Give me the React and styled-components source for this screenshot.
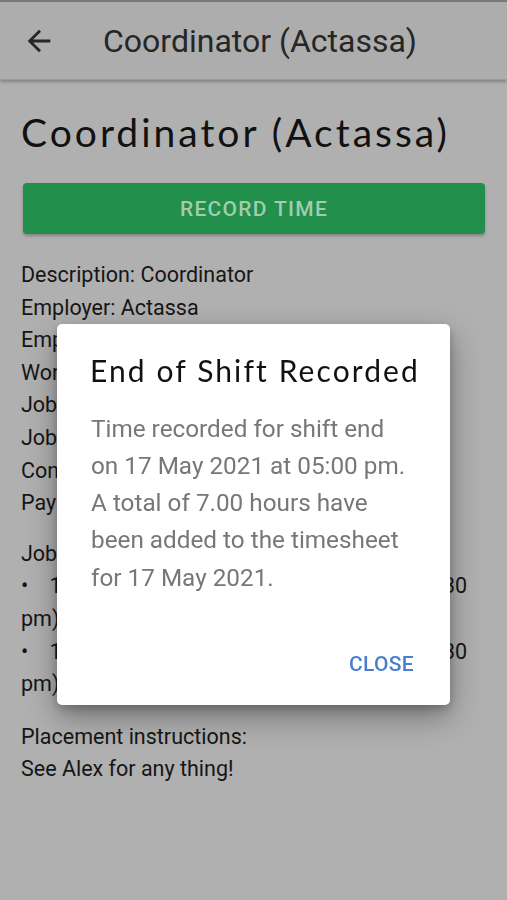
import React from "react";
import styled, { createGlobalStyle } from "styled-components";

const Global = createGlobalStyle`
  html, body { margin: 0; padding: 0; background: #b0b0b0; }
  body { font-family: Roboto, "Liberation Sans", sans-serif; }
  * { box-sizing: border-box; }
`;

const Page = styled.div`
  width: 507px;
  min-height: 900px;
  background: #b0b0b0;
  display: flex;
  flex-direction: column;
`;

const StatusEdge = styled.div`
  height: 2px;
  background: #7a7a7a;
`;

const AppBar = styled.header`
  height: 78px;
  background: #adadad;
  display: flex;
  align-items: center;
  padding-left: 22px;
  gap: 47px;
  box-shadow: 0 2px 3px rgba(0, 0, 0, 0.25);
  border-bottom: 1px solid #9c9c9c;
`;

const BackIcon = styled.svg`
  width: 34px;
  height: 34px;
  flex: none;
`;

const BarTitle = styled.h1`
  margin: 0;
  font-family: Roboto, sans-serif;
  font-weight: 400;
  font-size: 32px;
  color: #262626;
`;

const Content = styled.main`
  padding: 0 20px 0 21px;
  display: flex;
  flex-direction: column;
`;

const Heading = styled.h2`
  margin: 26px 0 0 0;
  font-family: Lato, sans-serif;
  font-weight: 400;
  font-size: 39px;
  letter-spacing: 3px;
  line-height: 52px;
  color: #111;
`;

const RecordButton = styled.button`
  margin: 25px 0 25px 2px;
  width: 462px;
  height: 51px;
  border: none;
  border-radius: 4px;
  background: #238f4c;
  color: #9fceaf;
  font-family: Roboto, sans-serif;
  font-weight: 500;
  font-size: 21px;
  letter-spacing: 1.3px;
  box-shadow: 0 2px 3px rgba(0, 0, 0, 0.25);
`;

const Block = styled.div`
  margin-bottom: ${(p) => p.$gap || 0}px;
`;

const Line = styled.div`
  font-family: Roboto, sans-serif;
  font-size: 21.5px;
  line-height: 32.6px;
  color: #161616;
`;

const Dialog = styled.div`
  position: fixed;
  left: 57px;
  top: 324px;
  width: 393px;
  height: 381px;
  background: #fff;
  border-radius: 5px;
  box-shadow: 0 12px 30px rgba(0, 0, 0, 0.35), 0 4px 10px rgba(0, 0, 0, 0.2);
  padding: 28px 36px 29px 33px;
  display: flex;
  flex-direction: column;
`;

const DialogTitle = styled.h3`
  margin: 0;
  font-family: Lato, sans-serif;
  font-weight: 400;
  font-size: 30px;
  letter-spacing: 2.1px;
  line-height: 36px;
  color: #111;
  white-space: nowrap;
`;

const DialogBody = styled.p`
  margin: 21.5px 0 0 1px;
  font-family: Roboto, sans-serif;
  font-size: 24.3px;
  line-height: 37.3px;
  color: #777;
`;

const Actions = styled.div`
  margin-top: auto;
  display: flex;
  justify-content: flex-end;
`;

const CloseButton = styled.button`
  border: none;
  background: none;
  padding: 0;
  font-family: Roboto, sans-serif;
  font-weight: 500;
  font-size: 21px;
  line-height: 24px;
  color: #4a7fcf;
  letter-spacing: 0.3px;
`;

export default function App() {
  return (
    <>
      <Global />
      <Page>
        <StatusEdge />
        <AppBar>
          <BackIcon viewBox="0 0 24 24">
            <path d="M20 11H7.83l5.59-5.59L12 4l-8 8 8 8 1.41-1.41L7.83 13H20v-2z" fill="#262626" />
          </BackIcon>
          <BarTitle>Coordinator (Actassa)</BarTitle>
        </AppBar>
        <Content>
          <Heading>Coordinator (Actassa)</Heading>
          <RecordButton>RECORD TIME</RecordButton>
          <Block $gap={18}>
            <Line>Description: Coordinator</Line>
            <Line>Employer: Actassa</Line>
            <Line>Employment type: Casual</Line>
            <Line>Work location: 12 Smith Street</Line>
            <Line>Job start date: 17 May 2021</Line>
            <Line>Job end date: 18 May 2021</Line>
            <Line>Contact: Alex</Line>
            <Line>Pay rate: $25.00 per hour</Line>
          </Block>
          <Block $gap={20}>
            <Line>Job shifts:</Line>
            <Line>•&nbsp;&nbsp;&nbsp; 17 May 2021, Monday (10:00 am until 05:30 pm)</Line>
            <Line>•&nbsp;&nbsp;&nbsp; 18 May 2021, Monday (10:00 am until 05:30 pm)</Line>
          </Block>
          <Block>
            <Line>Placement instructions:</Line>
            <Line>See Alex for any thing!</Line>
          </Block>
        </Content>
        <Dialog role="dialog">
          <DialogTitle>End of Shift Recorded</DialogTitle>
          <DialogBody>
            Time recorded for shift end on 17 May 2021 at 05:00 pm. A total of 7.00 hours have been added to the timesheet for 17 May 2021.
          </DialogBody>
          <Actions>
            <CloseButton>CLOSE</CloseButton>
          </Actions>
        </Dialog>
      </Page>
    </>
  );
}
